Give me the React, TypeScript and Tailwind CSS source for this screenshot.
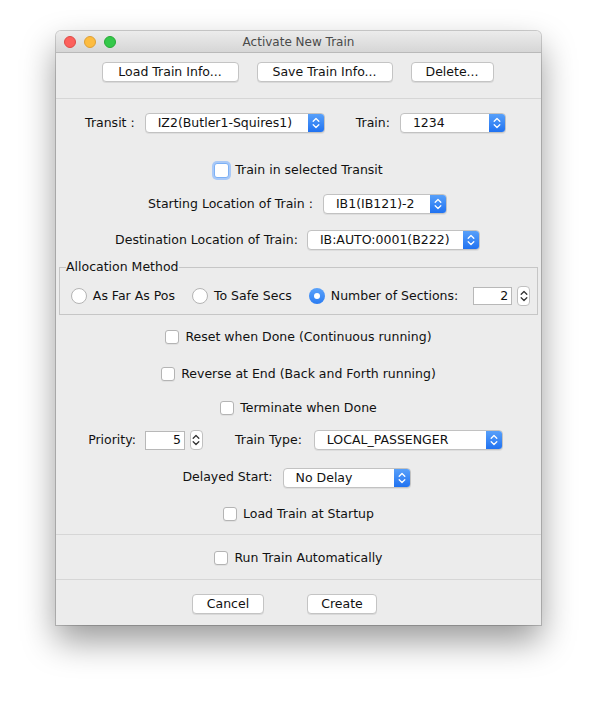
import React from "react";

const Chevrons = ({ color = "white" }: { color?: string }) => (
  <svg width="8" height="12" viewBox="0 0 8 12" fill="none">
    <path d="M1.2 4.2 L4 1.5 L6.8 4.2" stroke={color} strokeWidth="1.3" strokeLinecap="round" strokeLinejoin="round" />
    <path d="M1.2 7.8 L4 10.5 L6.8 7.8" stroke={color} strokeWidth="1.3" strokeLinecap="round" strokeLinejoin="round" />
  </svg>
);

const Combo = ({ value, w }: { value: string; w: string }) => (
  <div className={`${w} h-[20px] flex rounded-[4px] border border-[#c2c2c2] bg-white shadow-[0_1px_0_rgba(0,0,0,0.06)] overflow-hidden`}>
    <div className="flex-1 pl-[12px] leading-[18px] text-[#111] whitespace-nowrap overflow-hidden">{value}</div>
    <div className="w-[17px] -my-px -mr-px flex items-center justify-center rounded-r-[4px] bg-gradient-to-b from-[#5aa2fa] to-[#1c6ff0]">
      <Chevrons />
    </div>
  </div>
);

const Button = ({ label, w }: { label: string; w: string }) => (
  <div className={`${w} h-[20px] flex items-center justify-center rounded-[4px] border border-[#c4c4c4] bg-white shadow-[0_1px_0_rgba(0,0,0,0.08)] leading-[18px] text-[#111]`}>
    {label}
  </div>
);

const Check = ({ label, focus = false }: { label: string; focus?: boolean }) => (
  <div className="h-[20px] flex items-center justify-center">
    <div
      className={
        focus
          ? "w-[15px] h-[15px] rounded-[3px] border border-[#7cb0f5] bg-white shadow-[0_0_0_2px_#a9c9f7]"
          : "w-[14px] h-[14px] rounded-[3px] border border-[#b4b4b4] bg-white shadow-[0_1px_0_rgba(0,0,0,0.05)]"
      }
    />
    <span className="ml-[6px] leading-[20px] text-[#111] whitespace-nowrap">{label}</span>
  </div>
);

const Radio = ({ label, on = false }: { label: string; on?: boolean }) => (
  <div className="flex items-center">
    {on ? (
      <div className="w-[16px] h-[16px] rounded-full bg-gradient-to-b from-[#5aa2fa] to-[#2a7cf2] flex items-center justify-center">
        <div className="w-[6px] h-[6px] rounded-full bg-white" />
      </div>
    ) : (
      <div className="w-[16px] h-[16px] rounded-full border border-[#b4b4b4] bg-white" />
    )}
    <span className="ml-[6px] leading-[20px] text-[#111] whitespace-nowrap">{label}</span>
  </div>
);

const Spinner = ({ value, w, h }: { value: string; w: string; h: string }) => (
  <div className="flex items-center">
    <div className={`${w} ${h} border border-[#b8b8b8] bg-white text-right pr-[3px] text-[#111] leading-[16px]`}>{value}</div>
    <div className="ml-[5px] w-[13px] h-[20px] rounded-[4px] border border-[#c0c0c0] bg-white flex items-center justify-center">
      <Chevrons color="#333" />
    </div>
  </div>
);

const Sep = () => <div className="h-px bg-[#d6d6d6]" />;

export default function App() {
  return (
    <div
      className="min-h-[705px] bg-white pt-[31px] pl-[56px] text-[12.5px]"
      style={{ fontFamily: '"DejaVu Sans", "Liberation Sans", sans-serif' }}
    >
      <div className="w-[485px] rounded-t-[5px] bg-[#ececec] shadow-[0_0_0_1px_rgba(0,0,0,0.18),0_16px_34px_rgba(0,0,0,0.4)] pb-[11px]">
        {/* Title bar */}
        <div className="h-[22px] rounded-t-[5px] bg-gradient-to-b from-[#ececec] to-[#d6d6d6] border-b border-[#b9b9b9] flex items-center relative">
          <div className="flex items-center gap-[8px] pl-[8px]">
            <div className="w-[12px] h-[12px] rounded-full bg-[#fc605c] border border-[#de4a45]" />
            <div className="w-[12px] h-[12px] rounded-full bg-[#fdbc40] border border-[#dea035]" />
            <div className="w-[12px] h-[12px] rounded-full bg-[#34c84a] border border-[#27aa35]" />
          </div>
          <div className="flex-1 text-center text-[12px] text-[#4a4a4a] pr-[60px]">Activate New Train</div>
        </div>

        {/* Top buttons */}
        <div className="mt-[9px] flex justify-center gap-[18px] pr-[2px]">
          <Button label="Load Train Info..." w="w-[137px]" />
          <Button label="Save Train Info..." w="w-[136px]" />
          <Button label="Delete..." w="w-[83px]" />
        </div>

        <div className="mt-[16px]">
          <Sep />
        </div>

        {/* Transit row */}
        <div className="mt-[14px] h-[20px] flex items-center justify-center pr-[6px]">
          <span className="text-[#111]">Transit :</span>
          <div className="ml-[10px]">
            <Combo value="IZ2(Butler1-Squires1)" w="w-[180px]" />
          </div>
          <span className="ml-[31px] text-[#111]">Train:</span>
          <div className="ml-[10px]">
            <Combo value="1234" w="w-[106px]" />
          </div>
        </div>

        <div className="mt-[27px]">
          <Check label="Train in selected Transit" focus />
        </div>

        <div className="mt-[14px] h-[20px] flex items-center justify-center pr-[2px]">
          <span className="text-[#111]">Starting Location of Train :</span>
          <div className="ml-[10px]">
            <Combo value="IB1(IB121)-2" w="w-[124px]" />
          </div>
        </div>

        <div className="mt-[16px] h-[20px] flex items-center justify-center pr-[2px]">
          <span className="text-[#111]">Destination Location of Train:</span>
          <div className="ml-[9px]">
            <Combo value="IB:AUTO:0001(B222)" w="w-[173px]" />
          </div>
        </div>

        {/* Allocation method group */}
        <div className="mt-[17px] mx-[3px] relative border border-[#c6c6c6] pt-[18px] pb-[8px]">
          <span className="absolute -top-[9px] left-[6px] bg-[#ececec] pr-[1px] leading-[16px] text-[#111]">
            Allocation Method
          </span>
          <div className="h-[20px] flex items-center justify-center pl-[4px]">
            <Radio label="As Far As Pos" />
            <div className="ml-[17px]">
              <Radio label="To Safe Secs" />
            </div>
            <div className="ml-[17px]">
              <Radio label="Number of Sections:" on />
            </div>
            <div className="ml-[15px]">
              <Spinner value="2" w="w-[39px]" h="h-[18px]" />
            </div>
          </div>
        </div>

        <div className="mt-[12px]">
          <Check label="Reset when Done (Continuous running)" />
        </div>
        <div className="mt-[17px]">
          <Check label="Reverse at End (Back and Forth running)" />
        </div>
        <div className="mt-[14px]">
          <Check label="Terminate when Done" />
        </div>

        {/* Priority row */}
        <div className="mt-[12px] h-[20px] flex items-center justify-center pr-[6px]">
          <span className="text-[#111]">Priority:</span>
          <div className="ml-[9px]">
            <Spinner value="5" w="w-[40px]" h="h-[19px]" />
          </div>
          <span className="ml-[32px] text-[#111]">Train Type:</span>
          <div className="ml-[12px]">
            <Combo value="LOCAL_PASSENGER" w="w-[189px]" />
          </div>
        </div>

        <div className="mt-[17px] h-[21px] flex items-center justify-center pr-[4px]">
          <span className="text-[#111]">Delayed Start:</span>
          <div className="ml-[10px]">
            <Combo value="No Delay" w="w-[128px]" />
          </div>
        </div>

        <div className="mt-[16px]">
          <Check label="Load Train at Startup" />
        </div>

        <div className="mt-[10px]">
          <Sep />
        </div>

        <div className="mt-[13px]">
          <Check label="Run Train Automatically" />
        </div>

        <div className="mt-[11px]">
          <Sep />
        </div>

        <div className="mt-[14px] flex justify-center gap-[43px] pr-[28px]">
          <Button label="Cancel" w="w-[72px]" />
          <Button label="Create" w="w-[70px]" />
        </div>
      </div>
    </div>
  );
}
